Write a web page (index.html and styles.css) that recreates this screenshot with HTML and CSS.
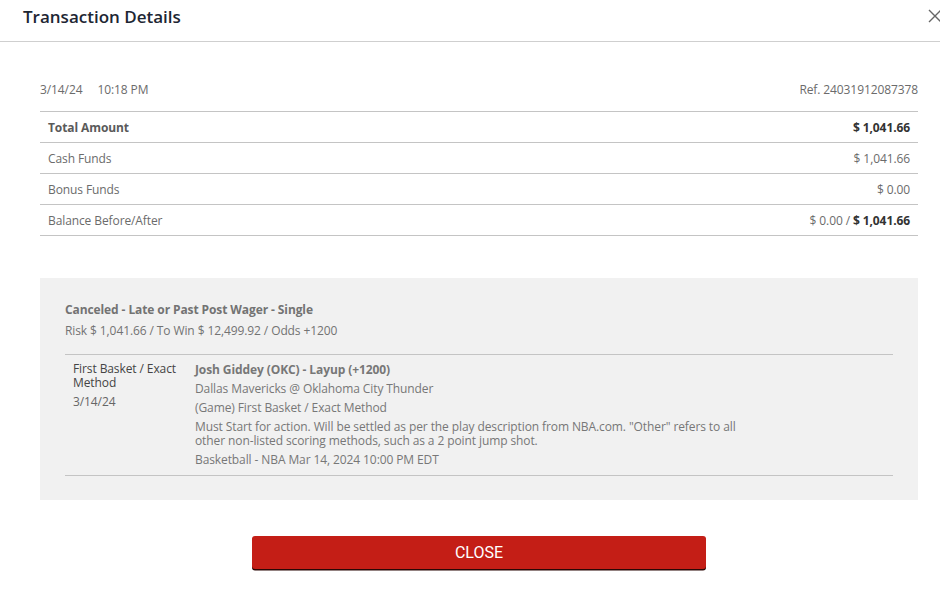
FILE: index.html
```html
<!DOCTYPE html>
<html>
<head>
<meta charset="utf-8">
<link rel="stylesheet" href="styles.css">
</head>
<body>
<div class="modal">
  <div class="modal-header">
    <h1 class="title">Transaction Details</h1>
    <button class="close-x" aria-label="Close">
      <svg width="14" height="14" viewBox="0 0 14 14"><path d="M1 1L13 13M13 1L1 13" stroke="#666" stroke-width="1.4" fill="none"/></svg>
    </button>
  </div>
  <div class="modal-body">
    <div class="meta">
      <div class="meta-date"><span>3/14/24</span><span class="time">10:18 PM</span></div>
      <div class="meta-ref">Ref. 24031912087378</div>
    </div>
    <div class="summary">
      <div class="row strong"><span>Total Amount</span><span>$ 1,041.66</span></div>
      <div class="row"><span>Cash Funds</span><span>$ 1,041.66</span></div>
      <div class="row"><span>Bonus Funds</span><span>$ 0.00</span></div>
      <div class="row"><span>Balance Before/After</span><span>$ 0.00 / <b>$ 1,041.66</b></span></div>
    </div>
    <div class="wager">
      <div class="wager-title">Canceled - Late or Past Post Wager - Single</div>
      <div class="wager-sub">Risk $ 1,041.66 / To Win $ 12,499.92 / Odds +1200</div>
      <div class="leg">
        <div class="leg-left">
          <div class="leg-type">First Basket / Exact Method</div>
          <div class="leg-date">3/14/24</div>
        </div>
        <div class="leg-right">
          <div class="leg-pick">Josh Giddey (OKC) - Layup (+1200)</div>
          <div class="leg-line">Dallas Mavericks @ Oklahoma City Thunder</div>
          <div class="leg-line">(Game) First Basket / Exact Method</div>
          <div class="leg-line leg-desc">Must Start for action. Will be settled as per the play description from NBA.com. "Other" refers to all other non-listed scoring methods, such as a 2 point jump shot.</div>
          <div class="leg-line">Basketball - NBA Mar 14, 2024 10:00 PM EDT</div>
        </div>
      </div>
    </div>
    <div class="actions">
      <button class="btn-close">CLOSE</button>
    </div>
  </div>
</div>
</body>
</html>
```
FILE: styles.css
```css
* { box-sizing: border-box; }
html, body { margin: 0; padding: 0; background: #fff; }
body { font-family: "Open Sans", "Noto Sans", sans-serif; color: #666; width: 940px; height: 594px; overflow: hidden; letter-spacing: -0.1px; }
.modal { width: 940px; }
.modal-header {
  height: 42px;
  border-bottom: 1px solid #cfcfcf;
  display: flex;
  align-items: flex-start;
  justify-content: space-between;
  padding: 6px 0 0 23px;
}
.title { margin: 0; font-size: 17px; font-weight: 600; color: #1d2633; line-height: 22px; letter-spacing: 0; }
.close-x { border: 0; background: none; padding: 0; margin: 3px -4px 0 0; width: 16px; height: 16px; display: flex; }
.modal-body { padding: 38px 22px 0 40px; }
.meta { display: flex; justify-content: space-between; font-size: 12px; line-height: 20px; color: #6b6b6b; height: 31px; }
.meta .time { margin-left: 15px; }
.summary { border-top: 1px solid #c4c4c4; }
.row {
  display: flex; justify-content: space-between;
  height: 31px; align-items: center;
  padding: 0 8px;
  border-bottom: 1px solid #c4c4c4;
  font-size: 12px; color: #6b6b6b;
}
.row.strong { font-weight: 700; color: #5a5a5a; }
.row b { color: #333; font-weight: 700; }
.row.strong span:last-child { color: #333; }
.wager {
  margin-top: 42px;
  background: #f1f1f1;
  padding: 23px 25px 0 25px;
  height: 222px;
}
.wager-title { font-size: 12px; font-weight: 700; color: #737373; line-height: 18px; }
.wager-sub { font-size: 12px; color: #737373; line-height: 18px; margin-top: 3px; }
.leg {
  margin-top: 14px;
  border-top: 1px solid #c4c4c4;
  border-bottom: 1px solid #c4c4c4;
  display: flex;
  padding: 5px 0 6px 8px;
  font-size: 12px;
}
.leg-left { width: 122px; color: #444; line-height: 14px; margin-top: 2px; }
.leg-date { color: #666; margin-top: 5px; }
.leg-right { flex: 1; color: #777; }
.leg-pick { font-weight: 700; color: #777; line-height: 19px; }
.leg-line { line-height: 19px; }
.leg-desc { max-width: 560px; line-height: 14px; margin: 3px 0 2px; }
.actions { display: flex; justify-content: center; padding-top: 36px; }
.btn-close {
  width: 454px; height: 33px;
  background: #c41e16; color: #fff;
  border: 0; border-radius: 3px;
  box-shadow: 0 1.5px 0 #2a0705;
  font-family: Roboto, sans-serif; font-size: 16px; letter-spacing: 0;
}
```
